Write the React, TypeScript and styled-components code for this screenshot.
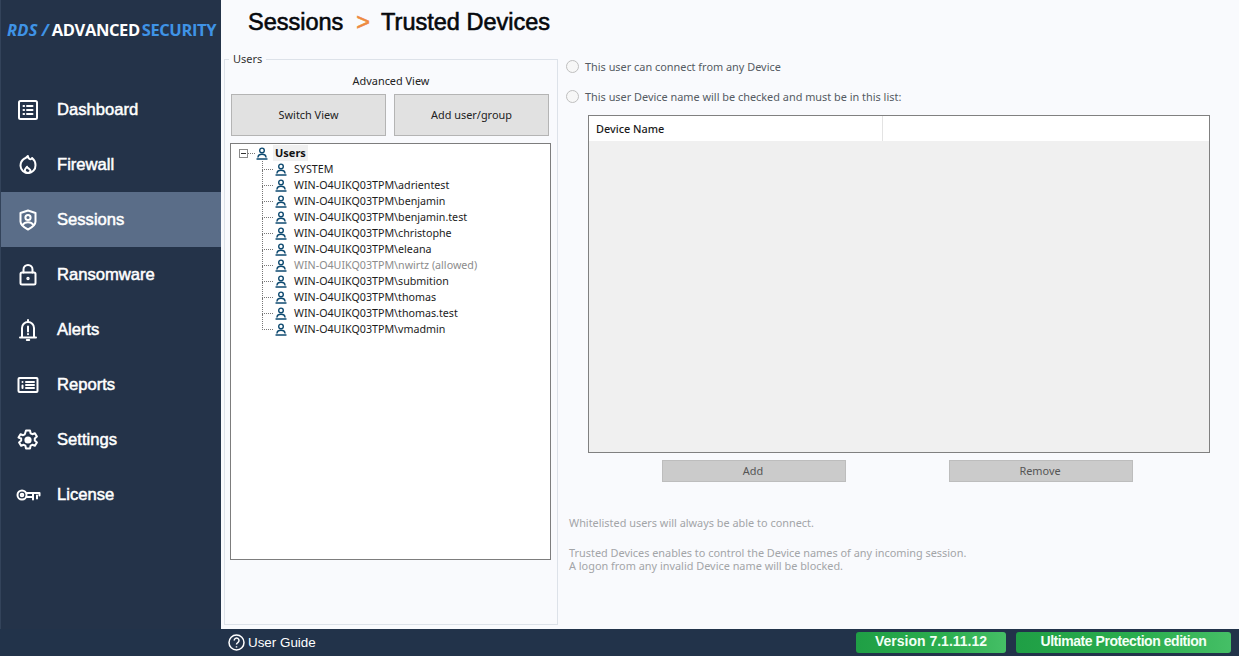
import React from "react";
import styled, { createGlobalStyle } from "styled-components";

const GlobalStyle = createGlobalStyle`
  html, body, #root { margin: 0; height: 100%; }
  body { background: #22334a; font-family: "Noto Sans", "Open Sans", sans-serif; overflow: hidden; }
  * { box-sizing: border-box; }
`;

const Shell = styled.div`
  width: 1239px;
  height: 656px;
  display: flex;
  flex-direction: column;
`;

const Main = styled.div`
  flex: 1;
  min-height: 0;
  display: flex;
`;

const Sidebar = styled.aside`
  width: 221px;
  background: #243349;
  border-left: 1px solid #33435a;
  display: flex;
  flex-direction: column;
`;

const Logo = styled.div`
  height: 82px;
  padding: 20px 0 0 6px;
  display: flex;
  gap: 4px;
  font-family: "Open Sans", sans-serif;
  font-size: 16.5px;
  line-height: 20px;
  font-weight: 700;
  white-space: nowrap;
  color: #ffffff;
  letter-spacing: -0.4px;
`;

const LogoBlue = styled.span`
  color: #3f93e6;
`;

const LogoMark = styled(LogoBlue)`
  font-style: italic;
  letter-spacing: 0.3px;
`;

const LogoSlash = styled(LogoMark)`
  margin-right: -1px;
  letter-spacing: 0;
`;

const LogoTail = styled(LogoBlue)`
  margin-left: 2px;
`;

const NavItem = styled.div<{ $active?: boolean }>`
  height: 55px;
  display: flex;
  align-items: center;
  padding-left: 14px;
  gap: 16px;
  background: ${(p) => (p.$active ? "#5a6d88" : "transparent")};
  color: #ffffff;
  font-family: "Liberation Sans", Arial, sans-serif;
  font-size: 16.6px;
  font-weight: 400;
  -webkit-text-stroke: 0.5px #ffffff;
  svg {
    width: 26px;
    height: 26px;
    flex: none;
    fill: none;
    stroke: #ffffff;
    stroke-width: 2;
    stroke-linecap: round;
    stroke-linejoin: round;
  }
`;

const Content = styled.main`
  flex: 1;
  min-width: 0;
  background: #f9fafd;
  display: flex;
  flex-direction: column;
  padding: 0 0 4px 3px;
`;

const Title = styled.h1`
  margin: 0;
  height: 52px;
  padding: 8px 0 0 24px;
  font-family: "Liberation Sans", Arial, sans-serif;
  font-size: 23.5px;
  line-height: 28px;
  font-weight: 400;
  color: #06080c;
  -webkit-text-stroke: 0.6px #06080c;
  display: flex;
  gap: 13px;
`;

const Chevron = styled.span`
  margin-right: -2px;
  color: #ee8a3f;
  -webkit-text-stroke: 0.6px #ee8a3f;
`;

const Body = styled.div`
  flex: 1;
  min-height: 0;
  display: flex;
`;

const UsersGroup = styled.fieldset`
  width: 333px;
  margin: 0;
  padding: 0 6px 0 6px;
  border: 1px solid #dde2e9;
  display: flex;
  flex-direction: column;
`;

const GroupLegend = styled.legend`
  margin-left: -2px;
  padding: 0 4px;
  font-size: 11px;
  line-height: 14px;
  color: #333333;
`;

const ViewLabel = styled.div`
  text-align: center;
  font-size: 10.9px;
  line-height: 16px;
  color: #222222;
  margin-top: 7px;
`;

const ButtonRow = styled.div`
  display: flex;
  gap: 8px;
  margin-top: 5px;
`;

const GreyButton = styled.button`
  width: 155px;
  height: 42px;
  padding: 0 0 2px;
  background: #e1e1e1;
  border: 1px solid #b4b4b4;
  font-family: inherit;
  font-size: 10.9px;
  color: #222222;
`;

const Tree = styled.div`
  width: 321px;
  height: 417px;
  margin: 7px 0 0 -1px;
  background: #ffffff;
  border: 1px solid #7d7d7d;
  padding: 1px 0 0 8px;
`;

const Row = styled.div<{ $dim?: boolean }>`
  height: 16px;
  display: flex;
  align-items: center;
  font-size: 10.7px;
  line-height: 16px;
  white-space: nowrap;
  color: ${(p) => (p.$dim ? "#8c8c8c" : "#1c1c1c")};
`;

const ChildRow = styled(Row)`
  padding-left: 23px;
  gap: 1px;
`;

const Expander = styled.span`
  width: 9px;
  height: 9px;
  border: 1px solid #8b8b8b;
  display: flex;
  align-items: center;
  justify-content: center;
  flex: none;
  &::before {
    content: "";
    width: 5px;
    height: 1px;
    background: #333333;
  }
`;

const RootLink = styled.span`
  width: 7px;
  border-top: 1px dotted #777777;
  flex: none;
`;

const RootLabel = styled.span`
  margin-left: 5px;
  padding: 0 2px;
  background: #f0f0f0;
  font-size: 11px;
  font-weight: 700;
  color: #111111;
`;

const Elbow = styled.span<{ $last?: boolean }>`
  width: 11px;
  height: 16px;
  flex: none;
  align-self: flex-start;
  &::before {
    content: "";
    display: block;
    height: 8px;
    border-left: 1px dotted #777777;
    border-bottom: 1px dotted #777777;
  }
  &::after {
    content: "";
    display: block;
    height: 8px;
    border-left: ${(p) => (p.$last ? "none" : "1px dotted #777777")};
  }
`;

const UserName = styled.span`
  margin-left: 6px;
`;

const PersonSvg = styled.svg`
  width: 12px;
  height: 13px;
  flex: none;
  margin-left: 1px;
  fill: none;
  stroke: #0e4a70;
  stroke-width: 1.4;
  stroke-linecap: round;
`;

const RightPanel = styled.section`
  flex: 1;
  min-width: 0;
  padding: 0 29px 0 8px;
  display: flex;
  flex-direction: column;
`;

const RadioRow = styled.label<{ $top: number }>`
  display: flex;
  align-items: center;
  gap: 6px;
  height: 16px;
  margin-top: ${(p) => p.$top}px;
  font-size: 10.9px;
  color: #555b63;
`;

const RadioDot = styled.span`
  width: 13px;
  height: 13px;
  border-radius: 50%;
  background: #f7f7f7;
  border: 1px solid #bfbfbf;
  flex: none;
`;

const DeviceTable = styled.div`
  height: 338px;
  margin: 11px 0 0 22px;
  background: #f0f0f0;
  border: 1px solid #808080;
`;

const TableHead = styled.div`
  height: 25px;
  background: #ffffff;
  display: flex;
`;

const HeadCell = styled.div`
  width: 294px;
  padding-left: 7px;
  border-right: 1px solid #e3e3e3;
  font-size: 10.9px;
  font-weight: 500;
  line-height: 26px;
  color: #1a1a1a;
`;

const ActionRow = styled.div`
  display: flex;
  gap: 103px;
  margin: 7px 0 0 96px;
`;

const ActionButton = styled.button`
  width: 184px;
  height: 22px;
  padding: 0 2px 1px 0;
  background: #cbcbcb;
  border: 1px solid #bdbdbd;
  font-family: inherit;
  font-size: 10.9px;
  color: #555555;
`;

const Notes = styled.p`
  margin: 0;
  font-size: 10.9px;
  line-height: 13px;
  color: #a3a5a8;
`;

const WhitelistNote = styled(Notes)`
  margin: 34px 0 17px 3px;
`;

const InfoNote = styled(Notes)`
  margin-left: 3px;
`;

const Footer = styled.footer`
  height: 27px;
  background: #22334a;
  display: flex;
  align-items: center;
  padding: 0 8px 0 228px;
  color: #ffffff;
`;

const GuideLink = styled.div`
  display: flex;
  align-items: center;
  gap: 3px;
  font-family: "Liberation Sans", Arial, sans-serif;
  font-size: 13.4px;
  margin-right: auto;
  svg {
    width: 17px;
    height: 17px;
    fill: none;
    stroke: #ffffff;
    stroke-width: 1.5;
  }
`;

const Pill = styled.div<{ $width: number; $tight?: boolean }>`
  width: ${(p) => p.$width}px;
  height: 21px;
  margin-left: 10px;
  border-radius: 3px;
  background: linear-gradient(90deg, #1f9f45 0%, #2cae4f 60%, #45bf66 100%);
  font-family: "Liberation Sans", Arial, sans-serif;
  font-size: 14px;
  font-weight: 700;
  line-height: 18px;
  text-align: center;
  color: #f2fff5;
  white-space: nowrap;
  letter-spacing: ${(p) => (p.$tight ? "-0.45px" : "0")};
`;

const icons: Record<string, React.ReactNode> = {
  dashboard: (
    <>
      <rect x="4" y="4" width="18" height="18" rx="1.5" />
      <path d="M8.500 9h.6M12 9h5.500M8.500 13h.6M12 13h5.500M8.500 17h.6M12 17h5.500" />
    </>
  ),
  firewall: (
    <>
      <path d="M12.800 4c.5 2.600 2.200 3.800 3.400 3 .5-.3.700-.6.900-1 2 1.700 3.400 4.400 3.400 7.200a7.500 7.500 0 0 1-15 .5c0-3 1.500-5.500 3.800-7 1.800-1.200 3-1.500 3.500-2.700Z" />
      <path d="M13 21c-2 0-3.200-1.200-3.200-2.700 0-1.500 1.500-2.400 2.200-3.600.3.900 1 1.200 1.800 1.900 1 .8 1.700 1.300 1.700 2-.1 1.300-1.100 2.400-2.500 2.400Z" />
    </>
  ),
  sessions: (
    <>
      <path d="M13 3.500 20.500 6v8.500c0 3.500-3.500 6-7.500 8-4-2-7.500-4.500-7.500-8V6Z" />
      <circle cx="13" cy="10.500" r="2.600" />
      <path d="M7.500 18c1.500-2 3.500-2.800 5.500-2.800s4 .8 5.500 2.800" />
    </>
  ),
  ransomware: (
    <>
      <rect x="5.500" y="10.500" width="15" height="12" rx="1.500" />
      <path d="M8.500 10.500V7.500a4.500 4.500 0 0 1 9 0v3" />
      <circle cx="13" cy="16.500" r=".7" />
    </>
  ),
  alerts: (
    <>
      <path d="M7 20V11a6 6 0 0 1 12 0v9" />
      <path d="M5 20.500h16M11.800 23h2.400M13 3v2M13 9.500v5M13 17v.3" />
    </>
  ),
  reports: (
    <>
      <rect x="3.500" y="6" width="19" height="14" rx="1" />
      <path d="M7.500 10v.1M7.500 13.500V16M11 10h8M11 13h8M11 16h8" />
    </>
  ),
  settings: (
    <>
      <path d="M11 3.500h4l.6 2.800 1.700.9 2.600-1 2 3.400-2.100 1.900v2l2.100 1.900-2 3.400-2.600-1-1.700.9-.6 2.800h-4l-.6-2.800-1.700-.9-2.600 1-2-3.400 2.100-1.900v-2L3.500 10.600l2-3.400 2.600 1 1.700-.9Z" />
      <circle cx="13" cy="13" r="2.600" fill="#ffffff" />
    </>
  ),
  license: (
    <>
      <circle cx="7" cy="13" r="4.500" />
      <circle cx="7" cy="13" r="1.300" />
      <path d="M11.500 11h13v2.500M11.500 15h6M18 11v6.500M22 13.500v3" />
    </>
  ),
};

const navItems = [
  ["dashboard", "Dashboard"],
  ["firewall", "Firewall"],
  ["sessions", "Sessions"],
  ["ransomware", "Ransomware"],
  ["alerts", "Alerts"],
  ["reports", "Reports"],
  ["settings", "Settings"],
  ["license", "License"],
];

const users = [
  "SYSTEM",
  "WIN-O4UIKQ03TPM\\adrientest",
  "WIN-O4UIKQ03TPM\\benjamin",
  "WIN-O4UIKQ03TPM\\benjamin.test",
  "WIN-O4UIKQ03TPM\\christophe",
  "WIN-O4UIKQ03TPM\\eleana",
  "WIN-O4UIKQ03TPM\\nwirtz (allowed)",
  "WIN-O4UIKQ03TPM\\submition",
  "WIN-O4UIKQ03TPM\\thomas",
  "WIN-O4UIKQ03TPM\\thomas.test",
  "WIN-O4UIKQ03TPM\\vmadmin",
];

function PersonIcon() {
  return (
    <PersonSvg viewBox="0 0 12 13">
      <circle cx="6" cy="3.400" r="2.300" />
      <path d="M2 10c.3-2 2-2.700 4-2.700s3.700.7 4 2.700" />
      <path d="M1 12h10" />
    </PersonSvg>
  );
}

export default function App() {
  return (
    <Shell>
      <GlobalStyle />
      <Main>
        <Sidebar>
          <Logo>
            <LogoMark>RDS</LogoMark>
            <LogoSlash>/</LogoSlash>
            <span>
              ADVANCED<LogoTail>SECURITY</LogoTail>
            </span>
          </Logo>
          {navItems.map(([key, label]) => (
            <NavItem key={key} $active={key === "sessions"}>
              <svg viewBox="0 0 26 26">{icons[key]}</svg>
              {label}
            </NavItem>
          ))}
        </Sidebar>
        <Content>
          <Title>
            <span>Sessions</span>
            <Chevron>&gt;</Chevron>
            <span>Trusted Devices</span>
          </Title>
          <Body>
            <UsersGroup>
              <GroupLegend>Users</GroupLegend>
              <ViewLabel>Advanced View</ViewLabel>
              <ButtonRow>
                <GreyButton>Switch View</GreyButton>
                <GreyButton>Add user/group</GreyButton>
              </ButtonRow>
              <Tree>
                <Row>
                  <Expander />
                  <RootLink />
                  <PersonIcon />
                  <RootLabel>Users</RootLabel>
                </Row>
                {users.map((name, i) => (
                  <ChildRow key={name} $dim={name.includes("allowed")}>
                    <Elbow $last={i === users.length - 1} />
                    <PersonIcon />
                    <UserName>{name}</UserName>
                  </ChildRow>
                ))}
              </Tree>
            </UsersGroup>
            <RightPanel>
              <RadioRow $top={6}>
                <RadioDot />
                This user can connect from any Device
              </RadioRow>
              <RadioRow $top={14}>
                <RadioDot />
                This user Device name will be checked and must be in this list:
              </RadioRow>
              <DeviceTable>
                <TableHead>
                  <HeadCell>Device Name</HeadCell>
                </TableHead>
              </DeviceTable>
              <ActionRow>
                <ActionButton>Add</ActionButton>
                <ActionButton>Remove</ActionButton>
              </ActionRow>
              <WhitelistNote>Whitelisted users will always be able to connect.</WhitelistNote>
              <InfoNote>
                Trusted Devices enables to control the Device names of any incoming session.
                <br />A logon from any invalid Device name will be blocked.
              </InfoNote>
            </RightPanel>
          </Body>
        </Content>
      </Main>
      <Footer>
        <GuideLink>
          <svg viewBox="0 0 17 17">
            <circle cx="8.500" cy="8.500" r="7.500" />
            <path d="M6.200 6.500a2.400 2.400 0 1 1 3.600 2.100c-.9.500-1.300 1-1.300 2M8.500 12.200v1.300" />
          </svg>
          User Guide
        </GuideLink>
        <Pill $width={150}>Version 7.1.11.12</Pill>
        <Pill $width={215} $tight>Ultimate Protection edition</Pill>
      </Footer>
    </Shell>
  );
}
